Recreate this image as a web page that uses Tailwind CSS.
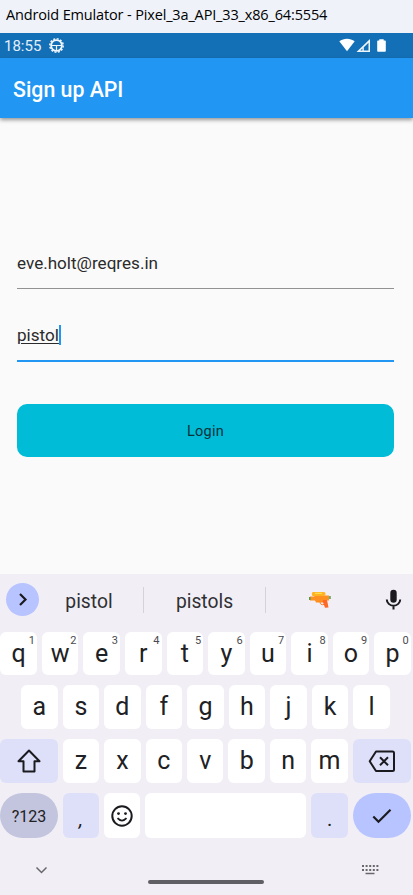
<!DOCTYPE html>
<html lang="en">
<head>
<meta charset="utf-8">
<title>Sign up API</title>
<script src="https://cdn.jsdelivr.net/npm/@tailwindcss/browser@4"></script>
</head>
<body class="w-[413px] h-[895px] overflow-hidden bg-[#fafafa] font-['Roboto',sans-serif] text-[#202124] flex flex-col">
<div class="h-[33px] shrink-0 bg-[#eff3f9] pl-[6px] flex items-center"><span class="font-['Open_Sans',sans-serif] text-[14.5px] leading-[20px] tracking-[-0.15px] text-black whitespace-nowrap -mt-[3px]">Android Emulator - Pixel_3a_API_33_x86_64:5554</span></div>
<div class="h-[25px] shrink-0 bg-[#1470b6] pl-[4px] pr-[26px] flex items-center text-white">
  <span class="text-[15px] leading-[20px] w-[45px] text-[#e4eff8] mt-[1px]">18:55</span>
  <svg class="w-[15px] h-[15px]" viewBox="0 0 15 15" fill="none" stroke="#f0f6fb"><circle cx="7.5" cy="7.5" r="5.400" stroke-width="1.800"/><circle cx="7.5" cy="7.5" r="6.700" stroke-width="1.500" stroke-dasharray="2 1.508"/><path d="M3 7.500h9M7.500 7.500v4.500" stroke-width="1.200"/></svg>
  <svg class="w-[48px] h-[15px] ml-auto" viewBox="0 0 48 15"><path d="M.3 3.200C4.800-.2 11.200-.2 15.700 3.200L8 13.200z" fill="#fff"/><path fill-rule="evenodd" d="M31 1V14H17.500zM29.500 4.700L24.800 9.200V12.600H29.500zM23.400 10.600L21.400 12.600H23.400z" fill="#eef5fb"/><path d="M40.300 1.200h4.400v1.300h1.300q.8 0 .8.800v9.700q0 .8-.8.800h-7q-.8 0-.8-.8V3.300q0-.8.800-.8h1.300z" fill="#fff"/></svg>
</div>
<header class="h-[60px] shrink-0 bg-[#2196f3] pl-[13px] flex items-center shadow-[0_2px_4px_rgba(0,0,0,0.4)]"><h1 class="text-[21.3px] leading-[24px] font-medium text-white mt-[3px]">Sign up API</h1></header>
<main class="h-[456px] shrink-0 pl-[17px] pr-[19px] pt-[131px] flex flex-col text-[17.1px] leading-[26px] text-[#2b2b2b]">
  <div class="h-[40px] pt-[1px] border-b border-[#929292]">eve.holt@reqres.in</div>
  <div class="mt-[33px] h-[40px] border-b-2 border-[#2196f3] flex items-start"><span class="underline underline-offset-[2px] decoration-1">pistol</span><span class="w-[2px] h-[20px] bg-[#2196f3] mt-[3px]"></span></div>
  <button class="mt-[42px] h-[53px] pt-[2px] rounded-[10px] bg-[#00bcd6] text-[14.5px] tracking-[0.2px] text-[#08313a]">Login</button>
</main>
<section class="h-[321px] shrink-0 bg-[#f1eff5] flex flex-col">
  <div class="h-[58px] flex items-center text-[19.3px] leading-[26px] pl-[6px] text-[#303034]">
    <span class="w-[33px] h-[33px] mt-[-7px] rounded-full bg-[#b8c4ff] flex items-center justify-center"><svg class="w-[33px] h-[33px]" viewBox="0 0 33 33" fill="none" stroke="#1b1b1f" stroke-width="2.200"><path d="M14 11l5.500 5.500L14 22"/></svg></span>
    <span class="w-[100px] text-center mt-[-3px]">pistol</span>
    <span class="ml-[4px] w-px h-[26px] bg-[#d5d3d9] mt-[-7px]"></span>
    <span class="w-[121px] text-center mt-[-3px]">pistols</span>
    <span class="w-px h-[26px] bg-[#d5d3d9] mt-[-7px]"></span>
    <svg class="w-[22px] h-[18px] ml-[43px] mt-[-7px]" viewBox="0 0 22 18"><path d="M1 5.500h4l1-1h14v5h-5l-1 2H7l-1-2H1z" fill="#ff8f1f"/><path d="M4 1h11q1.500 0 1.500 2T15 5H4Q2.800 5 2.800 3T4 1" fill="#ffb41f"/><path d="M6 1.800h7v1H6z" fill="#ffe35a"/><path d="M14 9h4l1.500 7.500-3.500.3L13.500 10z" fill="#ff6727"/><path d="M11 10.500q0 4 4 3" fill="none" stroke="#ff7b25"/><path d="M0 6h1.500v3H0zM20.200 5h1.500v3h-1.500z" fill="#4a9d50"/></svg>
    <svg class="w-[17px] h-[22px] ml-[54px] mt-[-7px]" viewBox="0 0 17 22"><rect x="5.300" y=".7" width="6.400" height="13" rx="3.200" fill="#1b1b1f"/><path d="M1.800 10.500a6.700 6.200 0 0 0 13.400 0M8.500 16.500v4" fill="none" stroke="#1b1b1f" stroke-width="2"/></svg>
  </div>
  <div class="h-[43px] pl-[0.400px] pr-[2.200px] grid grid-cols-10 gap-[5px] text-[25px] leading-[43px] text-center [&>div]:relative [&>div]:bg-white [&>div]:rounded-[6px] [&_sup]:absolute [&_sup]:right-[2px] [&_sup]:top-[3px] [&_sup]:text-[11px] [&_sup]:leading-[11px] [&_sup]:text-[#4a4a4f]">
    <div>q<sup>1</sup></div><div>w<sup>2</sup></div><div>e<sup>3</sup></div><div>r<sup>4</sup></div><div>t<sup>5</sup></div><div>y<sup>6</sup></div><div>u<sup>7</sup></div><div>i<sup>8</sup></div><div>o<sup>9</sup></div><div>p<sup>0</sup></div>
  </div>
  <div class="mt-[10px] h-[44px] pl-[21.100px] pr-[23.200px] grid grid-cols-9 gap-[5px] text-[25px] leading-[44px] text-center [&>div]:bg-white [&>div]:rounded-[6px]">
    <div>a</div><div>s</div><div>d</div><div>f</div><div>g</div><div>h</div><div>j</div><div>k</div><div>l</div>
  </div>
  <div class="mt-[10.300px] h-[43.500px] pl-[0.400px] pr-[2.200px] grid grid-cols-[57.300px_repeat(7,1fr)_58px] gap-[5px] text-[25px] leading-[43px] text-center [&>div]:bg-white [&>div]:rounded-[6px]">
    <span class="rounded-[6px] bg-[#dee0fa] flex items-center justify-center"><svg class="w-[26px] h-[26px]" viewBox="0 0 26 26" fill="none" stroke="#1b1b1f" stroke-width="2" stroke-linejoin="round"><path d="M13 2.500L23.500 13.300H18.500V23.500H7.500V13.300H2.500z"/></svg></span>
    <div>z</div><div>x</div><div>c</div><div>v</div><div>b</div><div>n</div><div>m</div>
    <span class="rounded-[6px] bg-[#dee0fa] flex items-center justify-center"><svg class="w-[28px] h-[24px]" viewBox="0 0 28 24" fill="none" stroke="#1b1b1f" stroke-width="2" stroke-linejoin="round"><path d="M8 2.500H24.500Q26 2.500 26 4V20.500Q26 22 24.500 22H8L1.700 12.300zM12 8.300l8 8M20 8.300l-8 8"/></svg></span>
  </div>
  <div class="mt-[10.500px] h-[45px] pl-[0.400px] pr-[2.200px] grid grid-rows-[45px] grid-cols-[57.300px_36.400px_36.400px_1fr_36.400px_58px] gap-[5px]">
    <div class="rounded-full bg-[#c3c4de] text-center text-[16px] leading-[47px]">?123</div>
    <div class="rounded-[6px] bg-[#dee0fa] text-center text-[20px] leading-[52px] italic overflow-hidden">,</div>
    <div class="rounded-[6px] bg-white flex items-center justify-center"><svg class="w-[22px] h-[22px]" viewBox="0 0 22 22" fill="none" stroke="#1b1b1f" stroke-width="2"><circle cx="11" cy="11" r="9.700"/><path d="M6.500 13.200q4.500 4.800 9 0" stroke-width="1.800"/><circle cx="7.500" cy="8.600" r="1.400" fill="#1b1b1f" stroke="none"/><circle cx="14.500" cy="8.600" r="1.400" fill="#1b1b1f" stroke="none"/></svg></div>
    <div class="rounded-[6px] bg-white"></div>
    <div class="rounded-[6px] bg-[#dee0fa] text-center text-[20px] leading-[52px] overflow-hidden">.</div>
    <div class="rounded-full bg-[#b8c4ff] flex items-center justify-center"><svg class="w-[20px] h-[16px]" viewBox="0 0 20 16" fill="none" stroke="#1b1b1f" stroke-width="2.200"><path d="M1.300 8.500L6.500 13.700 18.500 1.800"/></svg></div>
  </div>
  <div class="flex-1 flex items-start pl-[35px] pt-[25px]">
    <svg class="w-[13px] h-[13px]" viewBox="0 0 13 13" fill="none" stroke="#68676c" stroke-width="1.500"><path d="M1.500 4.500l5 5 5-5"/></svg>
    <span class="ml-[99.500px] mt-[17px] w-[116px] h-[4px] rounded-full bg-[#606064]"></span>
    <svg class="ml-[97px] w-[18px] h-[13px]" viewBox="0 0 18 13" fill="none" stroke="#68676c"><path d="M1 3h17M1 7h17" stroke-width="2" stroke-dasharray="2 1.600"/><path d="M4.500 10.500h9" stroke-width="1.500"/></svg>
  </div>
</section>
</body>
</html>
